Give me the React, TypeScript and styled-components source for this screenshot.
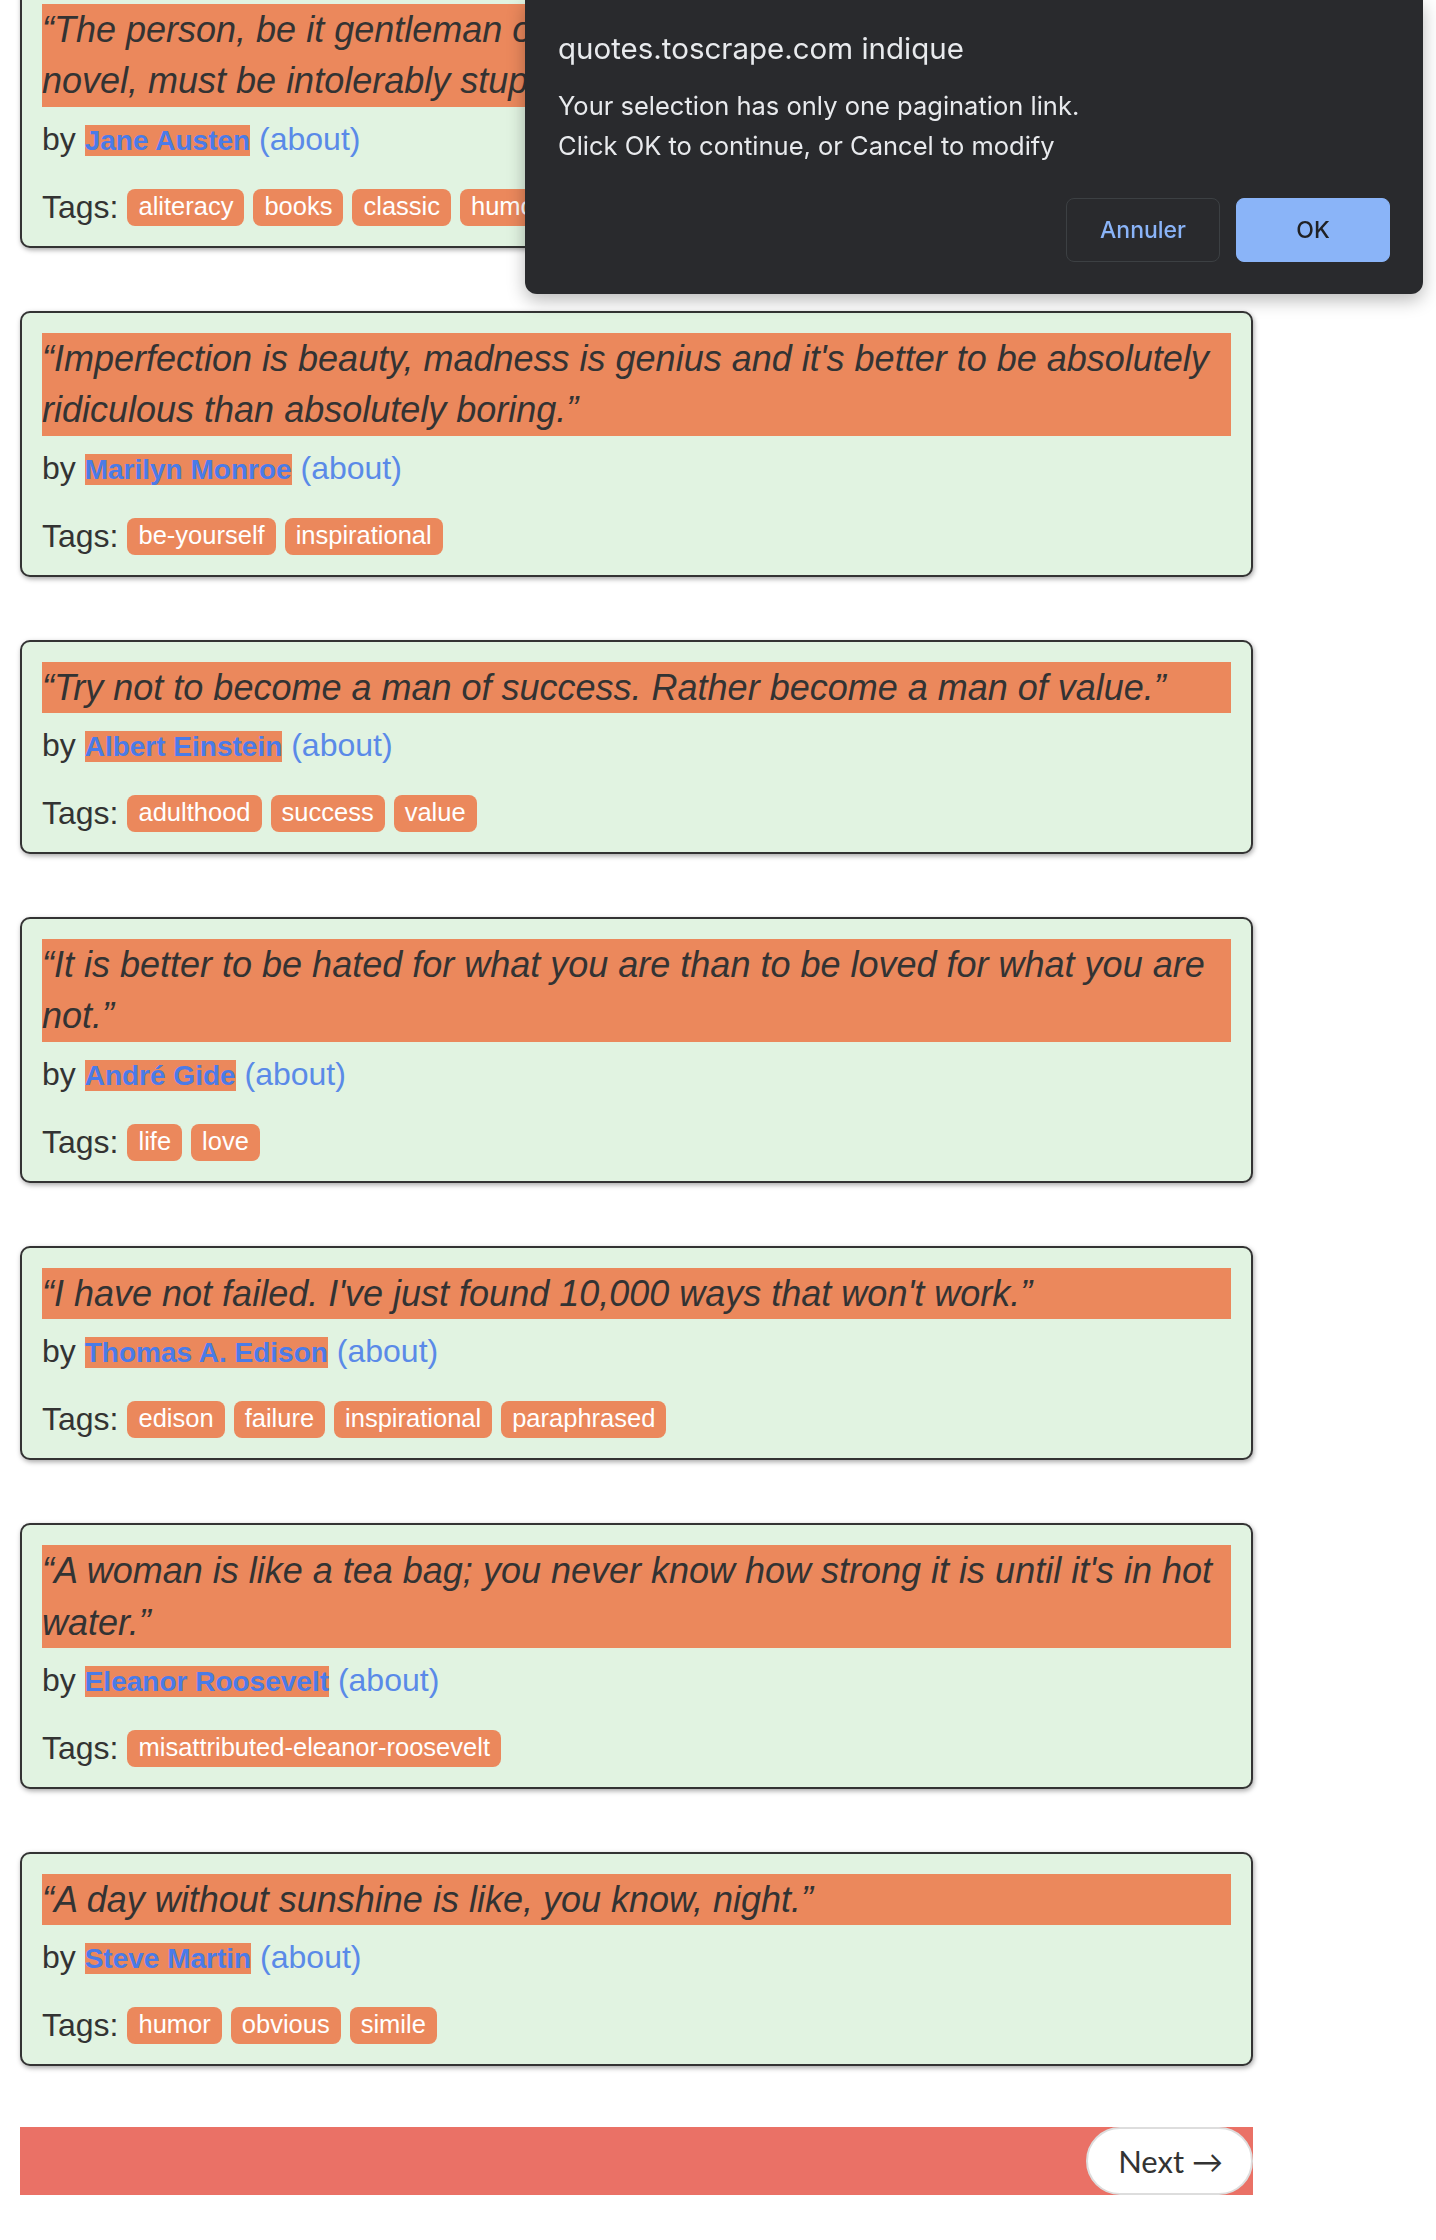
import React from "react";
import styled, { createGlobalStyle } from "styled-components";

const GlobalStyle = createGlobalStyle`
  html, body {
    margin: 0;
    padding: 0;
    background: #ffffff;
    overflow: hidden;
  }
  body {
    font-family: "Liberation Sans", Arial, Helvetica, sans-serif;
    color: #333333;
  }
`;

const Page = styled.div`
  width: 1233px;
  padding-left: 20px;
  margin-top: -18px;
  padding-bottom: 60px;
`;

const QuoteCard = styled.div`
  background: #e1f3e1;
  border: 2px solid #333333;
  border-radius: 10px;
  padding: 20px;
  margin-bottom: 63px;
  box-shadow: 1px 2px 5px rgba(0, 0, 0, 0.35);
  display: flex;
  flex-direction: column;
`;

const QuoteText = styled.span`
  display: block;
  background: #eb885c;
  font-style: italic;
  font-size: 36px;
  line-height: 51.4px;
  color: #333333;
  margin-bottom: 12px;
`;

const ByLine = styled.span`
  display: block;
  height: 40px;
  font-size: 32px;
  line-height: 40px;
  color: #333333;
  white-space: nowrap;
`;

const Author = styled.small`
  font-size: 28px;
  line-height: 1;
  font-weight: 700;
  background: #eb885c;
  color: #4a7be8;
`;

const AboutLink = styled.a`
  color: #5a8ae8;
  text-decoration: none;
`;

const TagsRow = styled.div`
  display: flex;
  align-items: center;
  flex-wrap: wrap;
  gap: 9px;
  height: 37px;
  margin-top: 30px;
  font-size: 32px;
  color: #333333;
`;

const TagsLabel = styled.span`
  line-height: 37px;
`;

const Tag = styled.a`
  display: inline-block;
  background: #eb885c;
  color: #ffffff;
  font-size: 25.5px;
  line-height: 31px;
  padding: 2px 11px 4px;
  border-radius: 8px;
  text-decoration: none;
`;

const Pager = styled.nav`
  display: flex;
  justify-content: flex-end;
  background: #ea7166;
  height: 68px;
  margin-top: -2px;
`;

const NextButton = styled.a`
  display: flex;
  align-items: center;
  box-sizing: border-box;
  height: 68px;
  padding: 0 28px 0 30px;
  background: #ffffff;
  border: 2px solid #dddddd;
  border-radius: 34px;
  font-family: Lato, "Open Sans", sans-serif;
  font-size: 31px;
  color: #333333;
  text-decoration: none;
`;

const Dialog = styled.div`
  position: fixed;
  top: 0;
  left: 525px;
  width: 898px;
  height: 294px;
  box-sizing: border-box;
  padding: 30px 33px 32px;
  background: #292a2d;
  border-radius: 0 0 12px 12px;
  box-shadow: 0 6px 18px rgba(0, 0, 0, 0.28);
  font-family: Inter, Roboto, "Noto Sans", sans-serif;
  display: flex;
  flex-direction: column;
`;

const DialogTitle = styled.div`
  font-size: 29.5px;
  line-height: 36px;
  color: #e8eaed;
`;

const DialogMessage = styled.div`
  margin-top: 20px;
  font-size: 25.5px;
  line-height: 40px;
  color: #e8eaed;
`;

const DialogActions = styled.div`
  display: flex;
  justify-content: flex-end;
  gap: 16px;
  margin-top: auto;
`;

const DialogButton = styled.button<{ $primary?: boolean }>`
  width: 154px;
  height: 64px;
  border-radius: 8px;
  font-family: Inter, Roboto, sans-serif;
  font-size: 23px;
  font-weight: 500;
  cursor: pointer;
  border: 1px solid ${(p) => (p.$primary ? "#8ab4f8" : "#3c4043")};
  background: ${(p) => (p.$primary ? "#8ab4f8" : "transparent")};
  color: ${(p) => (p.$primary ? "#202124" : "#8ab4f8")};
`;

type Quote = { text: string; author: string; tags: string[] };

const quotes: Quote[] = [
  {
    text: "The person, be it gentleman or lady, who has not pleasure in a good novel, must be intolerably stupid.",
    author: "Jane Austen",
    tags: ["aliteracy", "books", "classic", "humor"],
  },
  {
    text: "Imperfection is beauty, madness is genius and it's better to be absolutely ridiculous than absolutely boring.",
    author: "Marilyn Monroe",
    tags: ["be-yourself", "inspirational"],
  },
  {
    text: "Try not to become a man of success. Rather become a man of value.",
    author: "Albert Einstein",
    tags: ["adulthood", "success", "value"],
  },
  {
    text: "It is better to be hated for what you are than to be loved for what you are not.",
    author: "André Gide",
    tags: ["life", "love"],
  },
  {
    text: "I have not failed. I've just found 10,000 ways that won't work.",
    author: "Thomas A. Edison",
    tags: ["edison", "failure", "inspirational", "paraphrased"],
  },
  {
    text: "A woman is like a tea bag; you never know how strong it is until it's in hot water.",
    author: "Eleanor Roosevelt",
    tags: ["misattributed-eleanor-roosevelt"],
  },
  {
    text: "A day without sunshine is like, you know, night.",
    author: "Steve Martin",
    tags: ["humor", "obvious", "simile"],
  },
];

export default function App() {
  return (
    <>
      <GlobalStyle />
      <Page>
        {quotes.map((q) => (
          <QuoteCard key={q.author}>
            <QuoteText>{`\u201C${q.text}\u201D`}</QuoteText>
            <ByLine>
              by <Author>{q.author}</Author> <AboutLink href="#">(about)</AboutLink>
            </ByLine>
            <TagsRow>
              <TagsLabel>Tags:</TagsLabel>
              {q.tags.map((t) => (
                <Tag key={t} href="#">
                  {t}
                </Tag>
              ))}
            </TagsRow>
          </QuoteCard>
        ))}
        <Pager>
          <NextButton href="#">Next {"\u2192"}</NextButton>
        </Pager>
      </Page>
      <Dialog>
        <DialogTitle>quotes.toscrape.com indique</DialogTitle>
        <DialogMessage>
          Your selection has only one pagination link.
          <br />
          Click OK to continue, or Cancel to modify
        </DialogMessage>
        <DialogActions>
          <DialogButton>Annuler</DialogButton>
          <DialogButton $primary>OK</DialogButton>
        </DialogActions>
      </Dialog>
    </>
  );
}
